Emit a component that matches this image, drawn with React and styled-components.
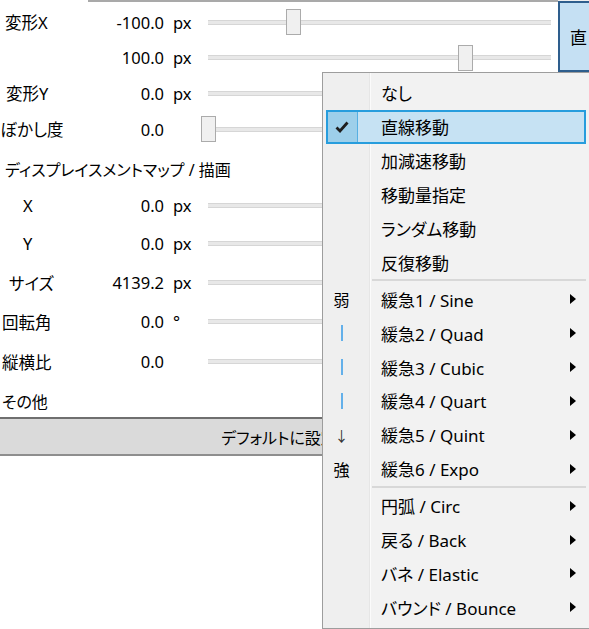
import styled, { createGlobalStyle } from 'styled-components';

const GlobalStyle = createGlobalStyle`
    html, body {
        margin: 0;
        padding: 0;
        background: #fff;
    }
    body {
        font-family: "Noto Sans", "Noto Sans CJK JP", sans-serif;
        font-feature-settings: "palt";
    }
`;

const Page = styled.div`
    position: relative;
    width: 589px;
    height: 629px;
    overflow: hidden;
    display: flex;
    background: #fff;
    color: #000;
`;

const Panel = styled.div`
    width: 558px;
    flex-shrink: 0;
    display: flex;
    flex-direction: column;
    font-size: 16.5px;
`;

const TopEdge = styled.div`
    height: 2px;
    margin: 0 0 2px 88px;
    background: #a9a9a9;
`;

const Row = styled.div`
    height: ${p => p.$h}px;
    box-sizing: border-box;
    padding-top: ${p => p.$pt || 0}px;
    display: grid;
    grid-template-columns: 110px 54px 44px 343px;
    align-items: center;
`;

const Label = styled.span`
    padding-left: ${p => p.$indent || 0}px;
    white-space: nowrap;
`;

const Heading = styled.span`
    grid-column: 1 / -1;
    padding-left: ${p => p.$indent || 0}px;
    white-space: nowrap;
    font-size: 16px;
`;

const Value = styled.span`
    text-align: right;
    white-space: nowrap;
`;

const Unit = styled.span`
    padding-left: 9px;
`;

const Slider = styled.div`
    position: relative;
    height: 26px;
    display: flex;
    align-items: center;
`;

const Track = styled.div`
    flex: 1;
    height: 5px;
    box-sizing: border-box;
    background: #e8e8e8;
    border-top: 1px solid #d6d6d6;
    border-bottom: 1px solid #d6d6d6;
`;

const Thumb = styled.div`
    position: absolute;
    top: 0;
    width: 15px;
    height: 26px;
    margin-left: -7.5px;
    box-sizing: border-box;
    background: #f0f0f0;
    border: 1px solid #ababab;
`;

const DefaultBar = styled.div`
    height: 39px;
    box-sizing: border-box;
    border-top: 2px solid #6f6f6f;
    border-bottom: 2px solid #8e8e8e;
    background: #dadada;
    display: flex;
    align-items: center;
    justify-content: center;
    white-space: nowrap;
    font-size: 16px;
`;

const SideColumn = styled.div`
    width: 80px;
    flex-shrink: 0;
    background: #f0f0f0;
    padding-top: 1px;
`;

const ModeButton = styled.div`
    height: 71px;
    box-sizing: border-box;
    border: 2px solid #2e5e8d;
    background: #c5e0f3;
    display: flex;
    align-items: center;
    padding-left: 10px;
    white-space: nowrap;
    font-size: 17px;
`;

const Menu = styled.div`
    position: absolute;
    left: 322px;
    top: 72px;
    width: 268px;
    height: 557px;
    box-sizing: border-box;
    border: 1px solid #9d9d9d;
    padding: 3px 3px 0 3px;
    font-size: 17px;
    background: linear-gradient(to right,
        #efefef 0 46px,
        #e6e6e6 46px 47px,
        #fbfbfb 47px 48px,
        #f2f2f2 48px);
`;

const Item = styled.div`
    height: 33.9px;
    box-sizing: border-box;
    display: flex;
    align-items: center;
    border: 2px solid ${p => p.$active ? '#279ddd' : 'transparent'};
    background: ${p => p.$active ? '#c6e2f3' : 'transparent'};
`;

const Gutter = styled.div`
    width: 30px;
    align-self: stretch;
    box-sizing: border-box;
    display: flex;
    align-items: center;
    justify-content: center;
    padding-right: 2px;
    font-size: 16px;
    background: ${p => p.$active ? '#9dcfea' : 'transparent'};
    border-right: 1px solid ${p => p.$active ? '#56afe2' : 'transparent'};
`;

const ItemText = styled.span`
    flex: 1;
    padding-left: 23px;
    white-space: nowrap;
`;

const SubArrow = styled.svg`
    margin-right: 8px;
`;

const Separator = styled.div`
    height: 2px;
    margin: 0 0 1px 46px;
    background: #d8d8d8;
`;

const BlueBar = styled.span`
    width: 2px;
    height: 16px;
    background: #63b0ea;
`;

const DownArrow = styled.span`
    font-size: 14px;
    color: #333;
`;

const rows = [
    { label: '変形X', value: '-100.0', unit: 'px', ratio: 0.25, h: 36, indent: 5 },
    { label: '', value: '100.0', unit: 'px', ratio: 0.75, h: 35 },
    { label: '変形Y', value: '0.0', unit: 'px', ratio: 0.5, h: 36, indent: 6 },
    { label: 'ぼかし度', value: '0.0', unit: '', ratio: 0, h: 36, indent: 0 },
    { heading: 'ディスプレイスメントマップ / 描画', h: 40, pt: 3, indent: 5 },
    { label: 'X', value: '0.0', unit: 'px', ratio: 0.5, h: 37, indent: 23 },
    { label: 'Y', value: '0.0', unit: 'px', ratio: 0.5, h: 39, indent: 23 },
    { label: 'サイズ', value: '4139.2', unit: 'px', ratio: 0.6, h: 39, indent: 9 },
    { label: '回転角', value: '0.0', unit: '°', ratio: 0.5, h: 39, indent: 2 },
    { label: '縦横比', value: '0.0', unit: '', ratio: 0.5, h: 41, indent: 2 },
    { heading: 'その他', h: 35, pt: 3, indent: 2 },
];

const menuGroups = [
    [
        { text: 'なし' },
        { text: '直線移動', checked: true },
        { text: '加減速移動' },
        { text: '移動量指定' },
        { text: 'ランダム移動' },
        { text: '反復移動' },
    ],
    [
        { text: '緩急1 / Sine', sub: true, mark: '弱' },
        { text: '緩急2 / Quad', sub: true, mark: 'bar' },
        { text: '緩急3 / Cubic', sub: true, mark: 'bar' },
        { text: '緩急4 / Quart', sub: true, mark: 'bar' },
        { text: '緩急5 / Quint', sub: true, mark: 'down' },
        { text: '緩急6 / Expo', sub: true, mark: '強' },
    ],
    [
        { text: '円弧 / Circ', sub: true },
        { text: '戻る / Back', sub: true },
        { text: 'バネ / Elastic', sub: true },
        { text: 'バウンド / Bounce', sub: true },
    ],
];

const CheckMark = () => (
    <svg width="14" height="12" viewBox="0 0 14 12">
        <path d="M1.5 6.5 L5 10 L12.5 1.5" fill="none" stroke="#1e1e1e" strokeWidth="2.8" />
    </svg>
);

const renderMark = (item) => {
    if (item.checked) return <CheckMark />;
    if (item.mark === 'bar') return <BlueBar />;
    if (item.mark === 'down') return <DownArrow>↓</DownArrow>;
    return item.mark || null;
};

const App = () => {
    return (
        <>
            <GlobalStyle />
            <Page>
                <Panel>
                    <TopEdge />
                    {rows.map((r, i) => (
                        <Row key={i} $h={r.h} $pt={r.pt}>
                            {r.heading ? (
                                <Heading $indent={r.indent}>{r.heading}</Heading>
                            ) : (
                                <>
                                    <Label $indent={r.indent}>{r.label}</Label>
                                    <Value>{r.value}</Value>
                                    <Unit>{r.unit}</Unit>
                                    <Slider>
                                        <Track />
                                        <Thumb style={{ left: `${r.ratio * 100}%` }} />
                                    </Slider>
                                </>
                            )}
                        </Row>
                    ))}
                    <DefaultBar>デフォルトに設定</DefaultBar>
                </Panel>
                <SideColumn>
                    <ModeButton>直</ModeButton>
                </SideColumn>
                <Menu>
                    {menuGroups.map((group, gi) => (
                        <div key={gi}>
                            {gi > 0 && <Separator />}
                            {group.map(item => (
                                <Item key={item.text} $active={item.checked}>
                                    <Gutter $active={item.checked}>{renderMark(item)}</Gutter>
                                    <ItemText>{item.text}</ItemText>
                                    {item.sub && (
                                        <SubArrow width="6" height="10" viewBox="0 0 6 10">
                                            <path d="M0 0 L6 5 L0 10 Z" fill="#000" />
                                        </SubArrow>
                                    )}
                                </Item>
                            ))}
                        </div>
                    ))}
                </Menu>
            </Page>
        </>
    );
};

export default App;
